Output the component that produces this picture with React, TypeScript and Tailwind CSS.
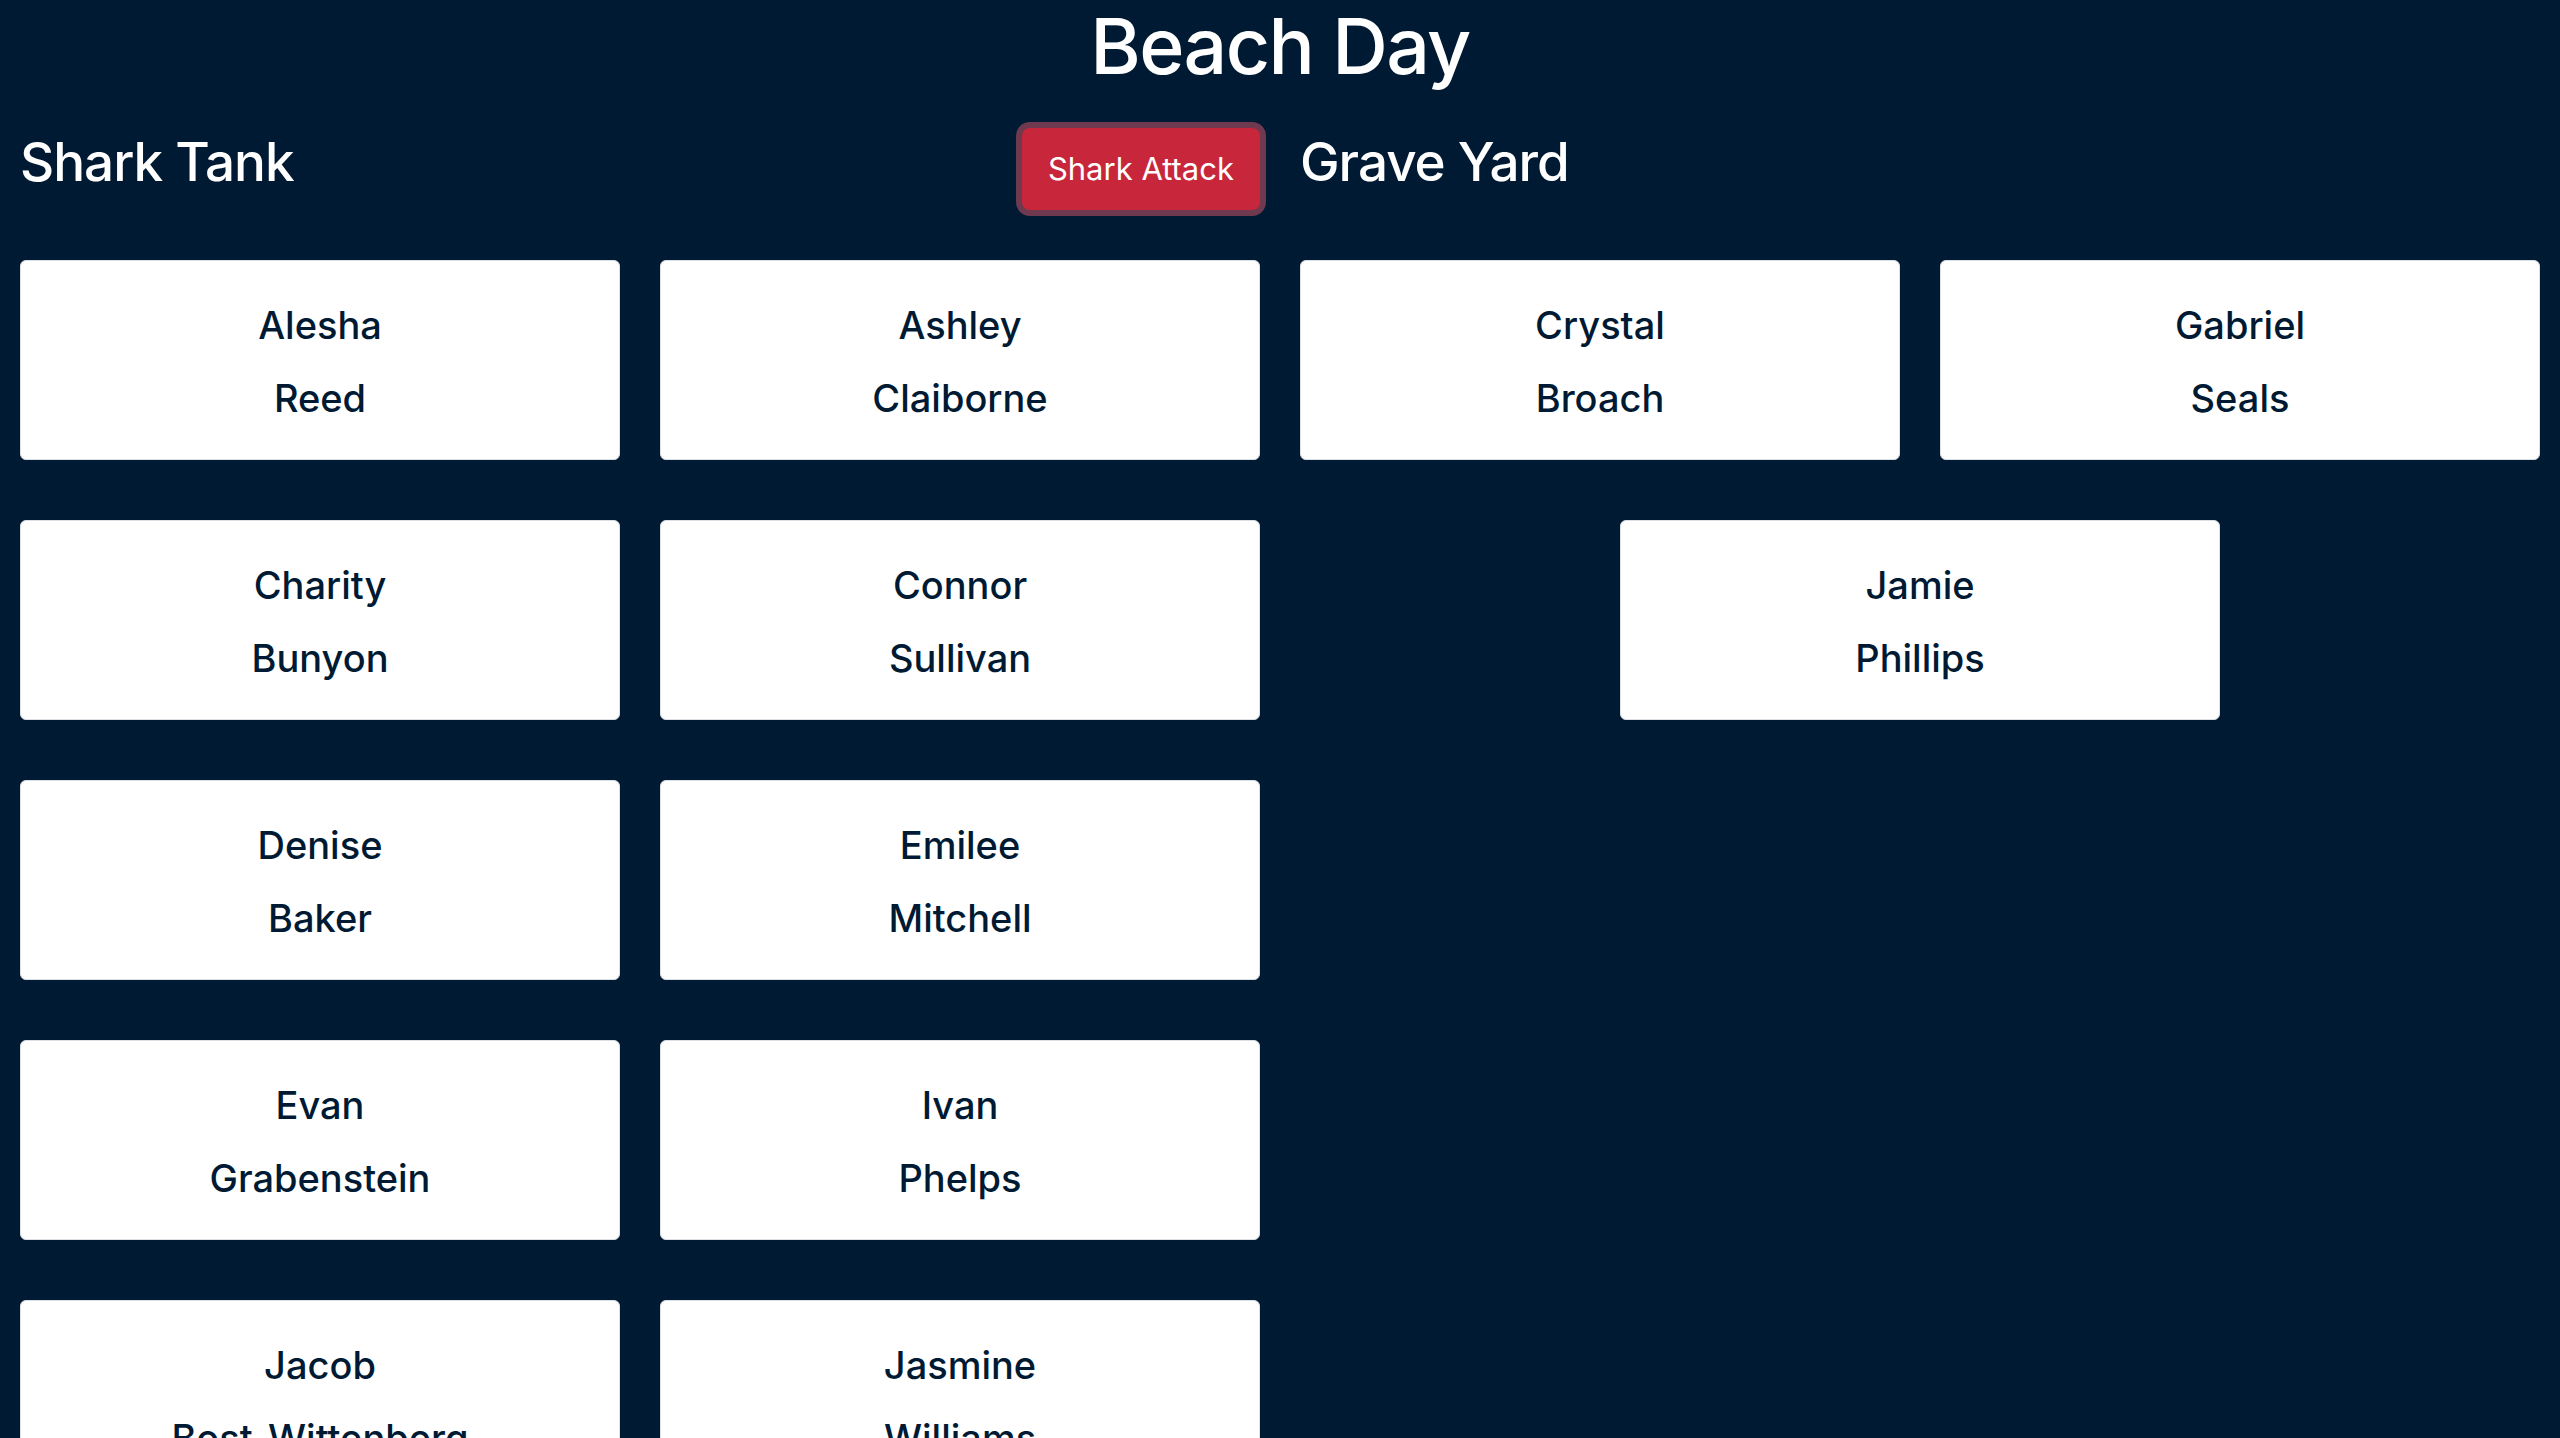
const sharkTank: [string, string][] = [
  ["Alesha", "Reed"],
  ["Ashley", "Claiborne"],
  ["Charity", "Bunyon"],
  ["Connor", "Sullivan"],
  ["Denise", "Baker"],
  ["Emilee", "Mitchell"],
  ["Evan", "Grabenstein"],
  ["Ivan", "Phelps"],
  ["Jacob", "Bost-Wittenberg"],
  ["Jasmine", "Williams"],
];

const graveYard: [string, string][] = [
  ["Crystal", "Broach"],
  ["Gabriel", "Seals"],
  ["Jamie", "Phillips"],
];

function PersonCard({ first, last }: { first: string; last: string }) {
  return (
    <div className="flex h-[200px] w-[600px] flex-col items-center justify-center rounded-[6px] border border-[#dcdfe3] bg-white pt-[4px] text-[38px] font-medium leading-[1.2] text-[#011a33]">
      <p className="mb-[28px]">{first}</p>
      <p>{last}</p>
    </div>
  );
}

export default function App() {
  return (
    <div
      className="min-h-screen bg-[#011a33] pb-[60px]"
      style={{ fontFamily: "Inter, 'Noto Sans', sans-serif" }}
    >
      <h1 className="text-center text-[77px] font-medium leading-[1.2] tracking-[-1.6px] text-white">Beach Day</h1>

      <div className="flex gap-10 px-5">
        {/* Shark Tank */}
        <div className="w-[1240px]">
          <div className="flex h-[168px] items-start justify-between">
            <h2 className="mt-[39px] text-[53px] font-medium leading-[1.2] tracking-[-1px] text-white">Shark Tank</h2>
            <button className="mt-[36px] h-[82px] rounded-[8px] bg-[#c8263a] px-[26px] text-[31px] text-white shadow-[0_0_0_6px_#6f3a50]">
              Shark Attack
            </button>
          </div>
          <div className="flex flex-wrap justify-center gap-x-10 gap-y-[60px]">
            {sharkTank.map(([f, l]) => (
              <PersonCard key={f + l} first={f} last={l} />
            ))}
          </div>
        </div>

        {/* Grave Yard */}
        <div className="w-[1240px]">
          <div className="flex h-[168px] items-start">
            <h2 className="mt-[39px] text-[53px] font-medium leading-[1.2] tracking-[-1px] text-white">Grave Yard</h2>
          </div>
          <div className="flex flex-wrap justify-center gap-x-10 gap-y-[60px]">
            {graveYard.map(([f, l]) => (
              <PersonCard key={f + l} first={f} last={l} />
            ))}
          </div>
        </div>
      </div>
    </div>
  );
}
